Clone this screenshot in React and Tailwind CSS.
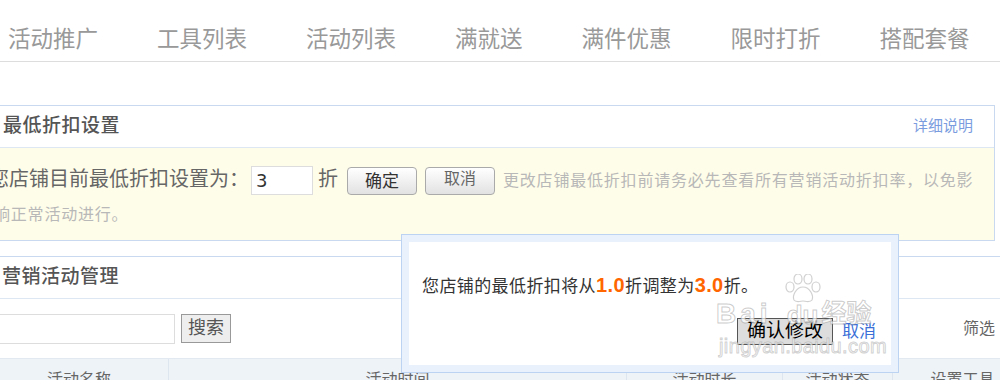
import React from 'react';

const tabs = ['活动推广', '工具列表', '活动列表', '满就送', '满件优惠', '限时打折', '搭配套餐'];

const cols = [
  { label: '活动名称', w: 'w-[179px]' },
  { label: '活动时间', w: 'w-[458px]' },
  { label: '活动时长', w: 'w-[156px]' },
  { label: '活动状态', w: 'w-[110px]' },
  { label: '设置工具', w: 'w-[140px]' },
];

const mark = "font-bold text-white/70 [-webkit-text-stroke:1px_rgba(140,140,140,0.45)]";

function Paw() {
  return (
    <svg width="38" height="30" viewBox="0 0 38 30" fill="rgba(255,255,255,0.75)" stroke="rgba(150,150,150,0.45)" strokeWidth="1.2">
      <ellipse cx="6" cy="13" rx="4" ry="5" />
      <ellipse cx="14" cy="5" rx="4" ry="5" />
      <ellipse cx="24" cy="5" rx="4" ry="5" />
      <ellipse cx="32" cy="13" rx="4" ry="5" />
      <path d="M19 13 C12 13 8 22 10 26 C12 29 17 27 19 27 C21 27 26 29 28 26 C30 22 26 13 19 13 Z" />
    </svg>
  );
}

export default function App() {
  return (
    <div className="relative w-[1000px] h-[380px] overflow-hidden bg-white font-['Liberation_Sans','Noto_Sans_CJK_SC',sans-serif]">
      {/* Tabs */}
      <div className="h-[62px] border-b border-[#dddddd] flex gap-[59px] pl-[8px] pt-[24px]">
        {tabs.map((t) => (
          <span key={t} className="text-[22.5px] leading-[32px] text-[#999999]">{t}</span>
        ))}
      </div>

      {/* 最低折扣设置 */}
      <div className="mt-[43px] -ml-[10px] w-[1005px] border border-[#c9d9ef]">
        <div className="h-[42px] flex items-center justify-between pl-[12px] pr-[21px] border-b border-[#dde7f4]">
          <span className="text-[19px] tracking-[0.5px] text-[#555555] font-medium">最低折扣设置</span>
          <span className="text-[15px] text-[#7b9de0]">详细说明</span>
        </div>
        <div className="h-[92px] bg-[#fefde9] pl-[3px] pr-[14px] pt-[15px] [text-indent:-5px] text-[20px] leading-[32px] text-[#666666]">
          您店铺目前最低折扣设置为：
          <span className="inline-block align-middle ml-[2px] w-[62px] h-[29px] border border-[#dddddd] bg-white pl-[4px] indent-0 text-[18px] leading-[27px] text-[#333333] font-['DejaVu_Sans',sans-serif]">3</span>
          <span className="ml-[5px]">折</span>
          <span className="inline-block align-middle ml-[9px] w-[70px] h-[28px] rounded-[4px] border border-[#aaaaaa] bg-gradient-to-b from-white to-[#e2e2e2] indent-0 text-center text-[17px] leading-[27px] text-[#333333]">确定</span>
          <span className="inline-block align-middle ml-[8px] w-[70px] h-[28px] rounded-[4px] border border-[#aaaaaa] bg-gradient-to-b from-white to-[#e2e2e2] indent-0 text-center text-[16px] leading-[22px] text-[#666666]">取消</span>
          <span className="ml-[8px] text-[16px] tracking-[0.8px] text-[#b8b8b8]">更改店铺最低折扣前请务必先查看所有营销活动折扣率，以免影响正常活动进行。</span>
        </div>
      </div>

      {/* 营销活动管理 */}
      <div className="mt-[15px] -ml-[10px] w-[1030px] border-t border-[#c9d9ef]">
        <div className="h-[42px] flex items-center pl-[12px] border-b border-[#dde7f4]">
          <span className="text-[19px] tracking-[0.5px] text-[#555555] font-medium">营销活动管理</span>
        </div>
        <div className="h-[59px] flex items-start pt-[15px]">
          <div className="w-[185px] h-[30px] border border-[#dddddd] bg-white" />
          <div className="ml-[6px] w-[50px] h-[29px] border border-[#999999] bg-[#eeeeee] text-center text-[18px] leading-[26px] text-[#555555]">搜索</div>
          <span className="ml-auto mr-[25px] mt-[3px] text-[16px] text-[#666666]">筛选</span>
        </div>
        <div className="h-[40px] flex bg-[#eef3f8] border-t border-[#e3e9f1]">
          {cols.map((c) => (
            <div key={c.label} className={`${c.w} shrink-0 border-r border-[#dde5ef] text-center pt-[9px] text-[16px] text-[#666666]`}>{c.label}</div>
          ))}
        </div>
      </div>

      {/* Confirm dialog */}
      <div className="absolute left-[401px] top-[234px] w-[498px] h-[139px] border border-[#bcd3f2] bg-[#e8f1fc] p-[7px]">
        <div className="h-full bg-white pl-[13px] pr-[15px] pt-[31px]">
          <p className="text-[17px] leading-[24px] tracking-[0.4px] text-[#333333]">
            您店铺的最低折扣将从<b className="text-[20px] text-[#ff6600] font-bold">1.0</b>折调整为<b className="text-[20px] text-[#ff6600] font-bold">3.0</b>折。
          </p>
          <div className="mt-[19px] flex justify-end items-center gap-[9px]">
            <span className="h-[27px] px-[9px] border border-[#555555] bg-[#dddddd] text-[19px] leading-[24px] text-black">确认修改</span>
            <span className="text-[17px] text-[#3a6fd8]">取消</span>
          </div>
        </div>
      </div>

      {/* Watermark */}
      <div className="absolute left-[716px] top-[274px] w-[170px] pointer-events-none">
        <div className="flex items-end">
          <span className={`text-[28px] leading-[24px] tracking-[4px] font-['Liberation_Sans',sans-serif] ${mark}`}>Bai</span>
          <span className="ml-[12px] flex flex-col items-center">
            <Paw />
            <span className={`text-[26px] leading-[22px] font-['Liberation_Sans',sans-serif] ${mark}`}>du</span>
          </span>
          <span className={`ml-[0px] text-[25px] leading-[26px] ${mark}`}>经验</span>
        </div>
        <div className="mt-[12px] ml-[3px] text-[20px] leading-[16px] tracking-[0.4px] text-white/70 [-webkit-text-stroke:1px_rgba(140,140,140,0.4)] font-['Liberation_Sans',sans-serif]">jingyan.baidu.com</div>
      </div>
    </div>
  );
}
